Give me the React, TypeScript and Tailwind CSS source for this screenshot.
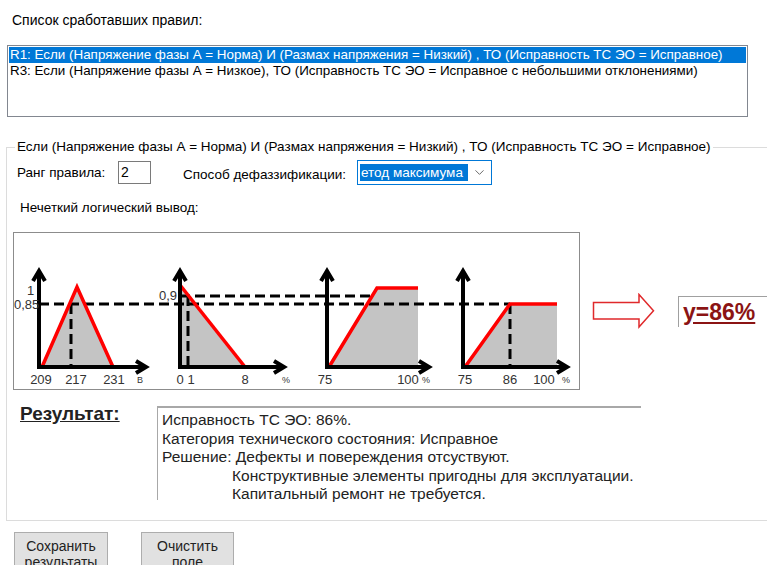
import { ChevronDown } from "lucide-react";

const rules = [
    "R1: Если (Напряжение фазы А = Норма) И (Размах напряжения = Низкий) , ТО (Исправность ТС ЭО = Исправное)",
    "R3: Если (Напряжение фазы А = Низкое), ТО (Исправность ТС ЭО = Исправное с небольшими отклонениями)",
];

// y axis with an arrow tip on top
const YAxis = ({ x, top, base }: { x: number; top: number; base: number }) => (
    <g stroke="#000" strokeWidth={4} fill="none">
        <line x1={x} y1={base + 2} x2={x} y2={top + 1} />
        <polyline points={`${x - 6},${top + 11} ${x},${top + 1} ${x + 6},${top + 11}`} />
    </g>
);

// x axis with an arrow tip on the right
const XAxis = ({ x, end, base }: { x: number; end: number; base: number }) => (
    <g stroke="#000" strokeWidth={4} fill="none">
        <line x1={x - 2} y1={base} x2={end - 1} y2={base} />
        <polyline points={`${end - 11},${base - 6} ${end - 1},${base} ${end - 11},${base + 6}`} />
    </g>
);

const Label = ({ x, children, small }: { x: number; children: string; small?: boolean }) => (
    <text x={x} y={small ? 151 : 152} textAnchor="middle" fontSize={small ? 9 : 13} fill="#333">
        {children}
    </text>
);

const InferenceChart = () => (
    <svg width="565" height="156" viewBox="0 0 565 156" className="block font-['Liberation_Sans',Arial,sans-serif]">
        <g transform="translate(-1,-1)">
            {/* membership areas */}
            <g fill="#c4c4c4">
                <polygon points="29,135 64,55 100,135" />
                <polygon points="167,53 232,135 167,135" />
                <polygon points="314,135 364,56 405,56 405,135" />
                <polygon points="450,135 497,72 544,72 544,135" />
            </g>

            {/* cut levels */}
            <g stroke="#000" strokeWidth={3} strokeDasharray="10 5" fill="none">
                <line x1={26} y1={72} x2={497} y2={72} />
                <line x1={167} y1={64} x2={360} y2={64} />
                <line x1={58} y1={72} x2={58} y2={135} />
                <line x1={175} y1={64} x2={175} y2={135} />
                <line x1={497} y1={72} x2={497} y2={135} />
            </g>

            {/* membership functions */}
            <g stroke="#ff0000" strokeWidth={3.5} fill="none" strokeLinejoin="miter">
                <polyline points="29,135 64,55 100,135" />
                <polyline points="167,53 232,135" />
                <polyline points="316,135 364,56 405,56" />
                <polyline points="452,135 497,72 544,72" />
            </g>

            <YAxis x={26} top={38} base={135} />
            <XAxis x={26} end={134} base={135} />
            <YAxis x={167} top={38} base={135} />
            <XAxis x={167} end={272} base={135} />
            <YAxis x={314} top={38} base={135} />
            <XAxis x={314} end={417} base={135} />
            <YAxis x={450} top={38} base={135} />
            <XAxis x={450} end={555} base={135} />

            <g fontSize={13} fill="#333">
                <text x={14} y={63}>1</text>
                <text x={1} y={77}>0,85</text>
                <text x={146} y={68}>0,9</text>
            </g>

            <Label x={28}>209</Label>
            <Label x={63}>217</Label>
            <Label x={101}>231</Label>
            <Label x={127} small>В</Label>

            <Label x={167}>0</Label>
            <Label x={178}>1</Label>
            <Label x={232}>8</Label>
            <Label x={273} small>%</Label>

            <Label x={312}>75</Label>
            <Label x={395}>100</Label>
            <Label x={413} small>%</Label>

            <Label x={452}>75</Label>
            <Label x={497}>86</Label>
            <Label x={531}>100</Label>
            <Label x={553} small>%</Label>
        </g>
    </svg>
);

export default function App() {
    return (
        <div className="w-[767px] h-[565px] overflow-hidden bg-white text-black text-[14px] font-['Liberation_Sans',Arial,sans-serif]">
            <div className="pt-[12px]">
                <p className="ml-[12px] leading-[16px]">Список сработавших правил:</p>

                {/* fired rules list */}
                <div className="ml-[7px] mt-[17px] w-[741px] h-[72px] border border-[#828790] p-[1px] text-[13.4px]">
                    {rules.map((rule, i) => (
                        <div
                            key={rule}
                            className={
                                i === 0
                                    ? "h-[16px] leading-[16px] px-[1px] whitespace-nowrap bg-[#0078d7] text-white"
                                    : "h-[16px] leading-[16px] px-[1px] whitespace-nowrap"
                            }
                        >
                            {rule}
                        </div>
                    ))}
                </div>

                {/* selected rule details */}
                <fieldset className="ml-[6px] mt-[22px] w-[800px] border border-[#dcdcdc] pb-[20px] text-[13.5px]">
                    <legend className="ml-[8px] px-[2px] leading-[16px]">
                        Если (Напряжение фазы А = Норма) И (Размах напряжения = Низкий) , ТО (Исправность ТС ЭО = Исправное)
                    </legend>

                    <div className="flex items-center mt-[5px] pl-[10px]">
                        <span className="w-[101px] leading-[16px]">Ранг правила:</span>
                        <div className="w-[33px] h-[23px] border border-[#7a7a7a] pl-[2px] leading-[21px] text-[14px]">2</div>
                        <span className="ml-[32px] w-[174px] mt-[5px] leading-[16px]">Способ дефаззификации:</span>
                        <div className="w-[135px] h-[25px] border border-[#0078d7] flex items-center pl-[2px] pr-[4px]">
                            <div className="w-[108px] h-[17px] bg-[#0078d7] text-white leading-[17px] overflow-hidden whitespace-nowrap pl-[1px]">
                                етод максимума
                            </div>
                            <ChevronDown className="ml-auto text-[#606060]" size={15} strokeWidth={1.5} />
                        </div>
                    </div>

                    <p className="ml-[13px] mt-[15px] leading-[16px]">Нечеткий логический вывод:</p>

                    <div className="flex items-center mt-[16px] ml-[6px]">
                        <div className="w-[567px] h-[158px] border border-[#8c8c8c] bg-white">
                            <InferenceChart />
                        </div>
                        <svg width="64" height="36" viewBox="0 0 64 36" className="ml-[12px]">
                            <path d="M1.5 9.5 H47 V1.5 L61.5 17.75 L47 34 V26 H1.5 Z" fill="#fff" stroke="#e0292b" strokeWidth={1.5} />
                        </svg>
                        <div className="ml-[22px] w-[90px] h-[31px] border-l border-t border-[#a0a0a0] pl-[4px]">
                            <span className="text-[23px] leading-[30px] font-bold text-[#8b1414] underline underline-offset-2">
                                y=86%
                            </span>
                        </div>
                    </div>

                    <div className="flex mt-[16px]">
                        <span className="ml-[13px] w-[137px] text-[19px] font-bold underline leading-[18px] mt-[-1px] text-[#222]">
                            Результат:
                        </span>
                        <div className="w-[484px] h-[94px] border-l border-t-2 border-[#a8a8a8] pl-[4px] pt-[3px] leading-[18.5px] text-[15.5px] text-[#222] whitespace-nowrap">
                            <p>Исправность ТС ЭО: 86%.</p>
                            <p>Категория технического состояния: Исправное</p>
                            <p>Решение: Дефекты и повереждения отсуствуют.</p>
                            <p className="pl-[70px]">Конструктивные элементы пригодны для эксплуатации.</p>
                            <p className="pl-[70px]">Капитальный ремонт не требуется.</p>
                        </div>
                    </div>
                </fieldset>

                <div className="flex gap-[33px] ml-[14px] mt-[11px]">
                    <button className="w-[94px] h-[44px] bg-[#e1e1e1] border border-[#adadad] text-[14px] leading-[16px] text-[#222] self-start flex flex-col items-center justify-start pt-[5px]">
                        <span>Сохранить</span>
                        <span>результаты</span>
                    </button>
                    <button className="w-[93px] h-[44px] bg-[#e1e1e1] border border-[#adadad] text-[14px] leading-[16px] text-[#222] self-start flex flex-col items-center justify-start pt-[5px]">
                        <span>Очистить</span>
                        <span>поле</span>
                    </button>
                </div>
            </div>
        </div>
    );
}
